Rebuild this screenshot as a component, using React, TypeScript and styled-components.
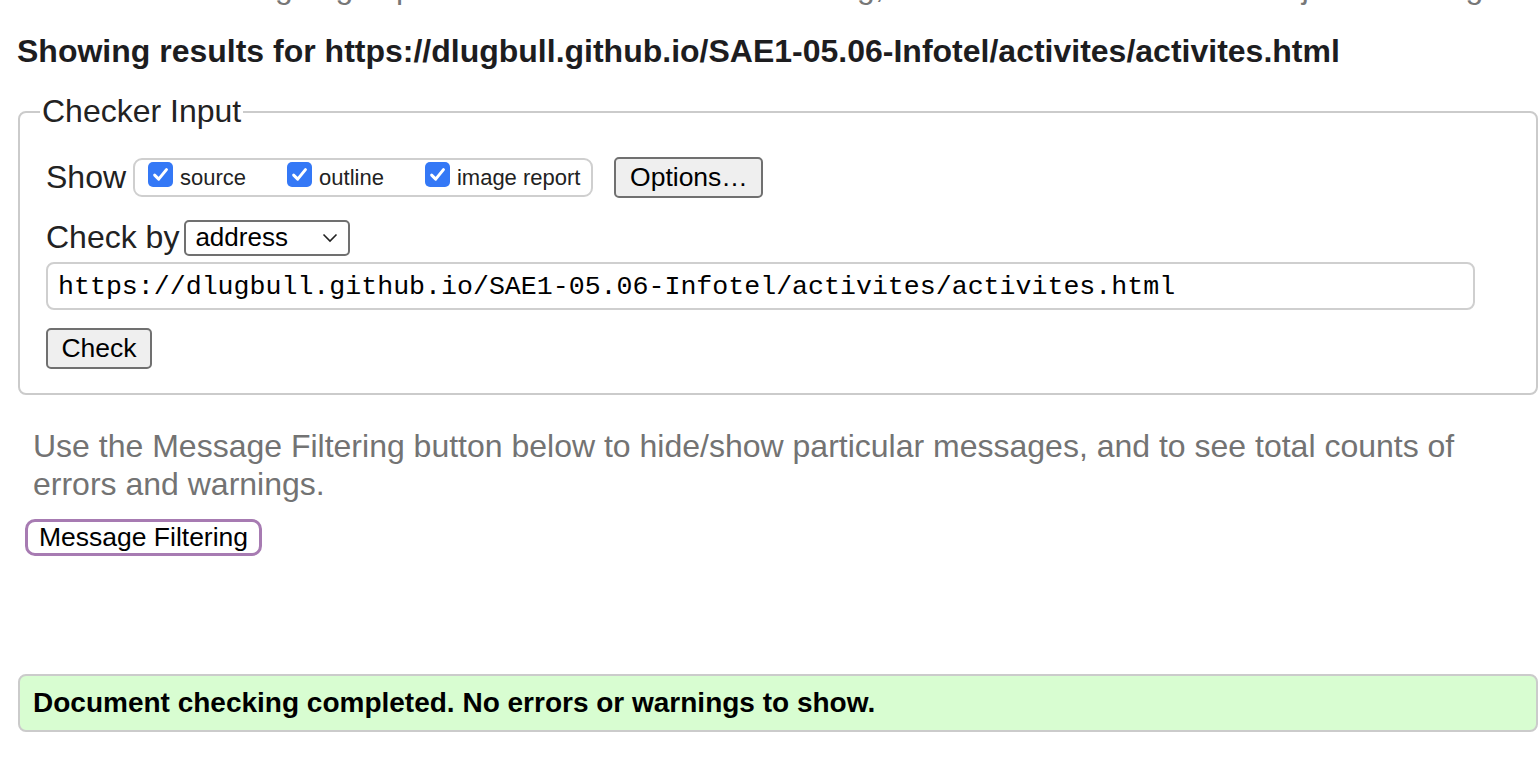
import styled, { createGlobalStyle } from "styled-components";

const GlobalStyle = createGlobalStyle`
  html, body {
    margin: 0;
    padding: 0;
    background: #fff;
    overflow: hidden;
  }
  body {
    font-family: "Liberation Sans", Arial, Helvetica, sans-serif;
    color: #222;
  }
`;

const sources = ["source", "outline", "image report"];

export default function App() {
  return (
    <Page>
      <GlobalStyle />
      <TopNote>
        This tool is an ongoing experiment in better HTML checking, and its behavior remains subject to change
      </TopNote>
      <Heading>
        Showing results for https://dlugbull.github.io/SAE1-05.06-Infotel/activites/activites.html
      </Heading>

      <Fieldset>
        <Legend>Checker Input</Legend>
        <ShowRow>
          <Label>Show</Label>
          <OptionGroup>
            {sources.map((s) => (
              <OptionItem key={s}>
                <CheckBox>
                  <svg width="17" height="17" viewBox="0 0 16 16">
                    <path
                      d="M2.5 8.6 L6.3 12.4 L13.6 3.4"
                      fill="none"
                      stroke="#fff"
                      strokeWidth="2.8"
                      strokeLinecap="round"
                      strokeLinejoin="round"
                    />
                  </svg>
                </CheckBox>
                <OptionText>{s}</OptionText>
              </OptionItem>
            ))}
          </OptionGroup>
          <GrayButton $w={149}>Options…</GrayButton>
        </ShowRow>

        <CheckByRow>
          <Label>Check by</Label>
          <Select>
            <span>address</span>
            <svg width="16" height="10" viewBox="0 0 16 10">
              <path d="M1.5 1.5 L8 8 L14.5 1.5" fill="none" stroke="#222" strokeWidth="1.6" />
            </svg>
          </Select>
        </CheckByRow>

        <UrlInput>https://dlugbull.github.io/SAE1-05.06-Infotel/activites/activites.html</UrlInput>

        <GrayButton $w={106} $top={18}>Check</GrayButton>
      </Fieldset>

      <Hint>
        Use the Message Filtering button below to hide/show particular messages, and to see total counts of errors and
        warnings.
      </Hint>

      <FilterButton>Message Filtering</FilterButton>

      <SuccessBox>Document checking completed. No errors or warnings to show.</SuccessBox>
    </Page>
  );
}

const Page = styled.div`
  padding: 0 2px 0 18px;
  display: flex;
  flex-direction: column;
  align-items: flex-start;
`;

const TopNote = styled.p`
  margin: -31px 0 0 15px;
  font-size: 32px;
  line-height: 37px;
  color: #777;
  white-space: nowrap;
`;

const Heading = styled.h2`
  margin: 27px 0 0 -1px;
  font-size: 32px;
  line-height: 37px;
  font-weight: bold;
  color: #1d1d1f;
  white-space: nowrap;
`;

const Fieldset = styled.fieldset`
  box-sizing: border-box;
  width: 1520px;
  margin: 23px 0 0 0;
  padding: 0 0 24px 26px;
  border: 2px solid #cbcbcb;
  border-radius: 8px;
  min-inline-size: auto;
`;

const Legend = styled.legend`
  margin-left: -6px;
  padding: 0 2px;
  font-size: 32px;
  line-height: 37px;
  color: #222;
`;

const Row = styled.div`
  display: flex;
  align-items: center;
`;

const ShowRow = styled(Row)`
  margin-top: 27px;
  height: 41px;
`;

const CheckByRow = styled(Row)`
  margin-top: 21px;
  height: 37px;
  gap: 5px;
`;

const Label = styled.span`
  font-size: 32px;
  line-height: 37px;
  color: #222;
`;

const OptionGroup = styled.div`
  box-sizing: border-box;
  display: flex;
  align-items: center;
  gap: 41px;
  height: 39px;
  margin-left: 7px;
  padding: 0 11px 0 13px;
  border: 2px solid #cfcfcf;
  border-radius: 9px;
`;

const OptionItem = styled.label`
  display: flex;
  align-items: center;
  gap: 7px;
`;

const CheckBox = styled.span`
  display: flex;
  align-items: center;
  justify-content: center;
  width: 25px;
  height: 25px;
  margin-bottom: 7px;
  border-radius: 5px;
  background: #3478f6;
`;

const OptionText = styled.span`
  font-size: 22px;
  line-height: 25px;
  color: #222;
`;

const GrayButton = styled.button<{ $w: number; $top?: number }>`
  box-sizing: border-box;
  width: ${(p) => p.$w}px;
  height: 41px;
  margin: ${(p) => p.$top ?? 0}px 0 0 0;
  padding: 0;
  background: #efefef;
  border: 2px solid #707070;
  border-radius: 5px;
  font-family: "Liberation Sans", Arial, sans-serif;
  font-size: 26.5px;
  color: #000;
  ${ShowRow} & {
    margin-left: 21px;
  }
`;

const Select = styled.div`
  box-sizing: border-box;
  display: flex;
  align-items: center;
  justify-content: space-between;
  width: 166px;
  height: 36px;
  padding: 0 10px 0 9px;
  border: 2px solid #707070;
  border-radius: 5px;
  font-size: 26px;
  color: #000;
`;

const UrlInput = styled.div`
  box-sizing: border-box;
  display: flex;
  align-items: center;
  width: 1429px;
  height: 48px;
  margin-top: 6px;
  padding: 2px 10px 0;
  border: 2px solid #cfcfcf;
  border-radius: 8px;
  font-family: "Liberation Mono", "DejaVu Sans Mono", monospace;
  font-size: 26.6px;
  color: #000;
  white-space: nowrap;
`;

const Hint = styled.p`
  margin: 32px 0 0 15px;
  max-width: 1480px;
  font-size: 32px;
  line-height: 38px;
  color: #737373;
`;

const FilterButton = styled.button`
  box-sizing: border-box;
  width: 237px;
  height: 37px;
  margin: 16px 0 0 7px;
  padding: 0;
  background: #fff;
  border: 3px solid #a77bb2;
  border-radius: 10px;
  font-family: "Liberation Sans", Arial, sans-serif;
  font-size: 26.5px;
  color: #000;
`;

const SuccessBox = styled.div`
  box-sizing: border-box;
  display: flex;
  align-items: center;
  width: 1520px;
  height: 58px;
  margin-top: 118px;
  padding-left: 13px;
  background: #d8fdd1;
  border: 2px solid #cbcbcb;
  border-radius: 8px;
  font-size: 28px;
  font-weight: bold;
  color: #000;
`;
